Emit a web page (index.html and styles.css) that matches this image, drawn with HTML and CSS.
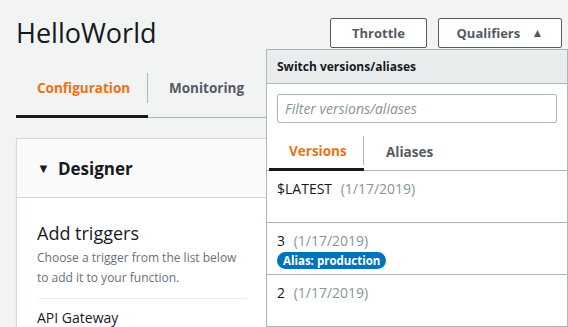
FILE: index.html
```html
<!DOCTYPE html>
<html lang="en">
<head>
  <meta charset="UTF-8">
  <meta name="viewport" content="width=device-width, initial-scale=1.0">
  <title>HelloWorld</title>
  <link rel="stylesheet" href="styles.css">
</head>
<body>
  <div class="page">
    <header class="top">
      <h1>HelloWorld</h1>
      <div class="top-actions">
        <button class="btn throttle">Throttle</button>
        <button class="btn">Qualifiers <span class="caret">&#9650;</span></button>
      </div>
    </header>

    <nav class="tabs">
      <a class="tab active">Configuration</a>
      <a class="tab">Monitoring</a>
    </nav>

    <section class="panel">
      <div class="panel-head">
        <span class="toggle">&#9660;</span>
        <h2>Designer</h2>
      </div>
      <div class="panel-body">
        <h3>Add triggers</h3>
        <p class="hint">Choose a trigger from the list below<br>to add it to your function.</p>
        <ul class="triggers">
          <li>API Gateway</li>
        </ul>
      </div>
    </section>
  </div>

  <div class="qualifiers">
    <div class="q-head">Switch versions/aliases</div>
    <div class="q-filter">
      <input type="text" placeholder="Filter versions/aliases">
    </div>
    <div class="q-tabs">
      <a class="q-tab active">Versions</a>
      <a class="q-tab">Aliases</a>
    </div>
    <ul class="q-list">
      <li>$LATEST <span class="date">(1/17/2019)</span></li>
      <li>3 <span class="date">(1/17/2019)</span><span class="badge">Alias: production</span></li>
      <li>2 <span class="date">(1/17/2019)</span></li>
    </ul>
  </div>
</body>
</html>
```

FILE: styles.css
```css
* {
  margin: 0;
  padding: 0;
  box-sizing: border-box;
  font-family: 'Open Sans', 'Noto Sans', sans-serif;
}

body {
  background-color: #f2f3f3;
  color: #16191f;
  overflow: hidden;
  height: 327px;
  position: relative;
}

.page {
  padding: 0 6px 0 16px;
}

.top {
  display: flex;
  justify-content: space-between;
  align-items: flex-start;
  height: 58px;
}

.top h1 {
  font-size: 27px;
  font-weight: 400;
  line-height: 32px;
  margin-top: 17px;
  color: #16191f;
}

.top-actions {
  display: flex;
  gap: 11px;
  margin-top: 18px;
}

.btn {
  height: 30px;
  width: 124px;
  background: #fff;
  border: 1px solid #545b64;
  border-radius: 2px;
  color: #545b64;
  font-size: 13px;
  font-weight: 700;
  padding: 0;
}

.btn.throttle {
  width: 97px;
}

.btn .caret {
  font-size: 12px;
  margin-left: 8px;
  position: relative;
  top: -1px;
}

.tabs {
  display: flex;
  border-bottom: 1px solid #aab7b8;
  height: 60px;
  align-items: stretch;
}

.tab {
  font-size: 13.5px;
  font-weight: 700;
  color: #545b64;
  padding: 0 21px;
  display: flex;
  align-items: center;
  position: relative;
}

.tab.active {
  color: #ec7211;
  border-bottom: 3px solid #16191f;
  margin-bottom: -1px;
  padding-top: 3px;
  width: 132px;
}

.tab.active::after {
  content: '';
  position: absolute;
  right: 0;
  top: 15px;
  height: 30px;
  border-right: 1px solid #aab7b8;
}

.panel {
  margin-top: 20px;
  width: 400px;
  border: 1px solid #d5dbdb;
  background: #fff;
  box-shadow: 0 1px 1px rgba(0, 0, 0, 0.1);
}

.panel-head {
  display: flex;
  align-items: center;
  height: 59px;
  padding: 0 20px;
  background: #fafafa;
  border-bottom: 1px solid #d5dbdb;
}

.toggle {
  font-size: 13px;
  margin-right: 8px;
}

.panel-head h2 {
  font-size: 17px;
  font-weight: 700;
}

.panel-body {
  padding: 22px 20px;
  width: 250px;
}

.panel-body h3 {
  font-size: 18px;
  font-weight: 400;
  line-height: 26px;
}

.hint {
  font-size: 12px;
  line-height: 20px;
  color: #687078;
  margin-top: 2px;
  padding-bottom: 10px;
  border-bottom: 1px solid #eaeded;
}

.triggers {
  list-style: none;
  font-size: 14px;
  margin-top: 9px;
}

.qualifiers {
  position: absolute;
  left: 266px;
  top: 49px;
  width: 302px;
  height: 300px;
  background: #fff;
  border: 1px solid #aab7b8;
}

.q-head {
  background: #eaeded;
  height: 34px;
  padding: 0 10px;
  font-size: 12px;
  font-weight: 700;
  line-height: 33px;
  border-bottom: 1px solid #aab7b8;
}

.q-filter {
  padding: 10px 10px 0;
}

.q-filter input {
  width: 100%;
  height: 29px;
  border: 1px solid #aab7b8;
  border-radius: 2px;
  padding: 0 7px;
  font-size: 14px;
  font-style: italic;
}

.q-filter input::placeholder {
  color: #879596;
}

.q-tabs {
  display: flex;
  height: 48px;
  padding-left: 2px;
  border-bottom: 1px solid #aab7b8;
}

.q-tab {
  font-size: 13.5px;
  font-weight: 700;
  color: #545b64;
  padding: 10px 22px 0;
  display: flex;
  align-items: center;
  position: relative;
}

.q-tab.active {
  color: #ec7211;
  width: 95px;
  padding: 10px 20px 0;
  border-bottom: 3px solid #16191f;
  margin-bottom: -1px;
}

.q-tab.active::after {
  content: '';
  position: absolute;
  right: 0;
  top: 13px;
  height: 29px;
  border-right: 1px solid #aab7b8;
}

.q-list {
  list-style: none;
}

.q-list li {
  height: 52px;
  padding: 8px 10px 0;
  font-size: 14px;
  line-height: 20px;
  border-bottom: 1px solid #aab7b8;
}

.date {
  color: #879596;
  margin-left: 5px;
}

.badge {
  display: table;
  margin-top: 1px;
  background: #0073bb;
  color: #fff;
  font-size: 11.5px;
  font-weight: 700;
  line-height: 17px;
  padding: 0 6px;
  border-radius: 9px;
}
```
